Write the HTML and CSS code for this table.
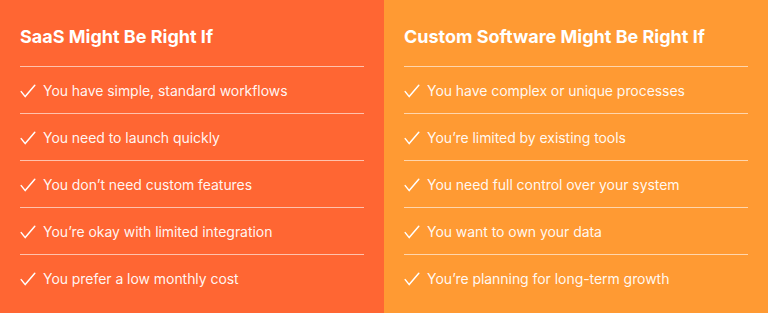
FILE: index.html
```html
<!DOCTYPE html>
<html lang="en">
<head>
<meta charset="utf-8">
<link rel="stylesheet" href="styles.css">
</head>
<body>
<div class="compare">
  <section class="col col-saas">
    <h2 class="col-title">SaaS Might Be Right If</h2>
    <ul class="list">
      <li class="item"><svg class="check" viewBox="0 0 16 14"><path d="M1.2 7.6 L5.2 12.6 L14.8 1.2"/></svg><span>You have simple, standard workflows</span></li>
      <li class="item"><svg class="check" viewBox="0 0 16 14"><path d="M1.2 7.6 L5.2 12.6 L14.8 1.2"/></svg><span>You need to launch quickly</span></li>
      <li class="item"><svg class="check" viewBox="0 0 16 14"><path d="M1.2 7.6 L5.2 12.6 L14.8 1.2"/></svg><span>You don’t need custom features</span></li>
      <li class="item"><svg class="check" viewBox="0 0 16 14"><path d="M1.2 7.6 L5.2 12.6 L14.8 1.2"/></svg><span>You’re okay with limited integration</span></li>
      <li class="item"><svg class="check" viewBox="0 0 16 14"><path d="M1.2 7.6 L5.2 12.6 L14.8 1.2"/></svg><span>You prefer a low monthly cost</span></li>
    </ul>
  </section>
  <section class="col col-custom">
    <h2 class="col-title">Custom Software Might Be Right If</h2>
    <ul class="list">
      <li class="item"><svg class="check" viewBox="0 0 16 14"><path d="M1.2 7.6 L5.2 12.6 L14.8 1.2"/></svg><span>You have complex or unique processes</span></li>
      <li class="item"><svg class="check" viewBox="0 0 16 14"><path d="M1.2 7.6 L5.2 12.6 L14.8 1.2"/></svg><span>You’re limited by existing tools</span></li>
      <li class="item"><svg class="check" viewBox="0 0 16 14"><path d="M1.2 7.6 L5.2 12.6 L14.8 1.2"/></svg><span>You need full control over your system</span></li>
      <li class="item"><svg class="check" viewBox="0 0 16 14"><path d="M1.2 7.6 L5.2 12.6 L14.8 1.2"/></svg><span>You want to own your data</span></li>
      <li class="item"><svg class="check" viewBox="0 0 16 14"><path d="M1.2 7.6 L5.2 12.6 L14.8 1.2"/></svg><span>You’re planning for long-term growth</span></li>
    </ul>
  </section>
</div>
</body>
</html>
```
FILE: styles.css
```css
* { box-sizing: border-box; }
html, body { margin: 0; padding: 0; }
body {
  font-family: Inter, "Noto Sans", sans-serif;
  color: #fff;
}
.compare {
  display: grid;
  grid-template-columns: 384px 384px;
  height: 313px;
}
.col {
  padding: 0 20px 12px;
}
.col-saas { background: #ff6633; }
.col-custom { background: #ff9a33; }
.col-title {
  margin: 0;
  padding: 25px 0 17px;
  font-size: 18px;
  line-height: 24px;
  font-weight: 700;
}
.list {
  list-style: none;
  margin: 0;
  padding: 0;
}
.item {
  height: 47px;
  border-top: 1px solid rgba(255, 255, 255, 0.6);
  display: flex;
  align-items: center;
  gap: 7px;
  font-size: 14px;
  letter-spacing: -0.05px;
  color: rgba(255, 255, 255, 0.95);
  padding-top: 1px;
}
.check {
  width: 16px;
  height: 14px;
  flex: none;
  fill: none;
  stroke: #fff;
  stroke-width: 1.5;
  stroke-linecap: round;
  stroke-linejoin: round;
}
```
